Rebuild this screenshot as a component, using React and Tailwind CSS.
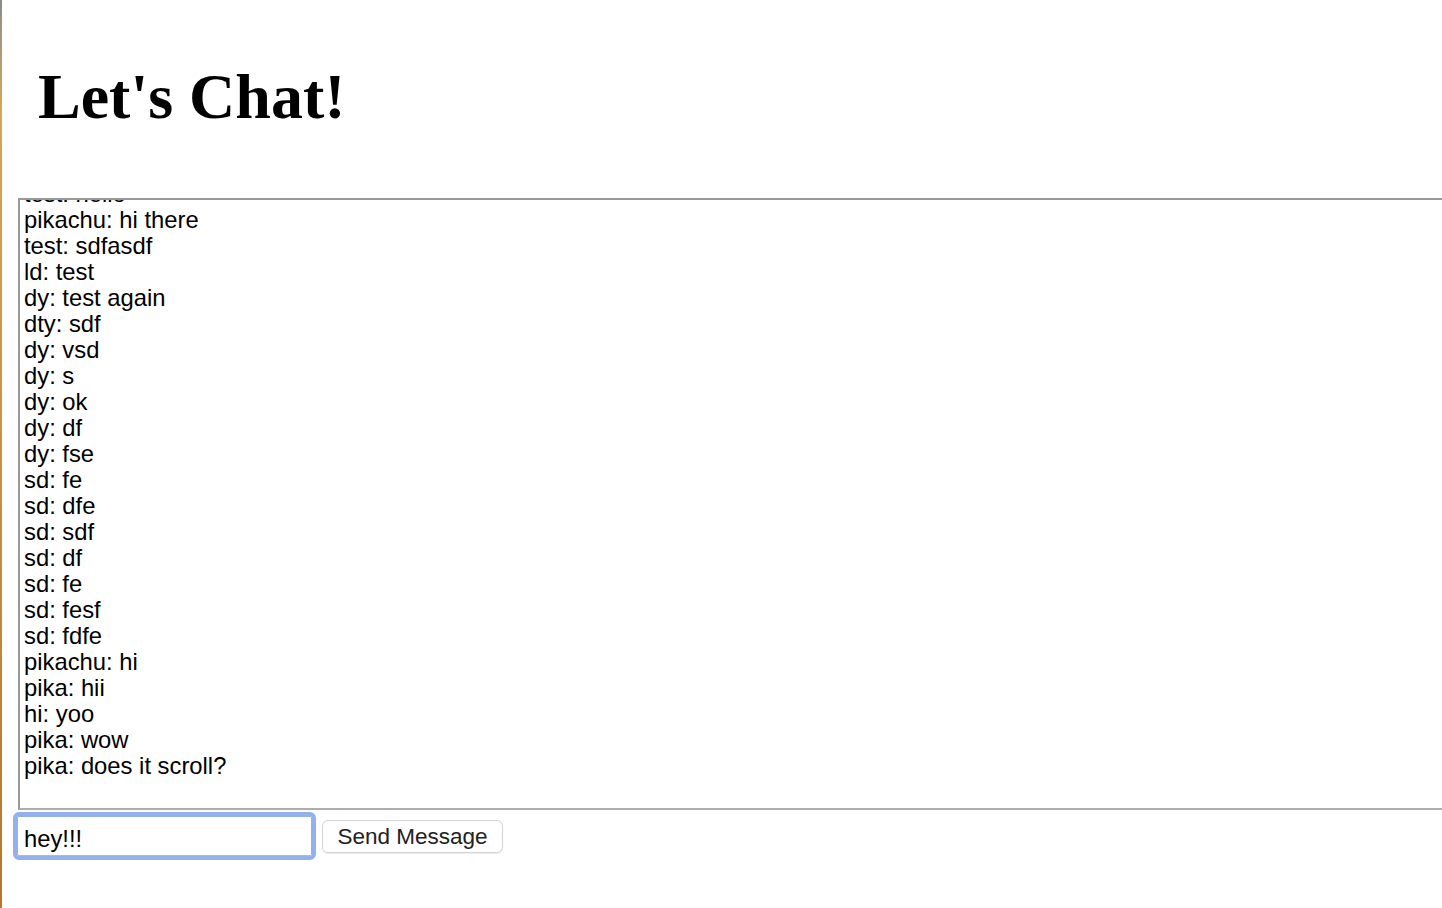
import React from "react";

const messages = [
  "test: hello",
  "pikachu: hi there",
  "test: sdfasdf",
  "ld: test",
  "dy: test again",
  "dty: sdf",
  "dy: vsd",
  "dy: s",
  "dy: ok",
  "dy: df",
  "dy: fse",
  "sd: fe",
  "sd: dfe",
  "sd: sdf",
  "sd: df",
  "sd: fe",
  "sd: fesf",
  "sd: fdfe",
  "pikachu: hi",
  "pika: hii",
  "hi: yoo",
  "pika: wow",
  "pika: does it scroll?",
];

export default function App() {
  return (
    <div className="flex h-[908px] w-full overflow-hidden bg-white">
      <div className="w-[2px] shrink-0 bg-gradient-to-b from-[#8c8c8c] from-0% via-[#d1a753] via-12% to-[#b6772d] to-100%" />
      <div className="flex min-w-0 flex-1 flex-col">
        <h1
          className="ml-[36px] mt-[65px] text-[64px] font-bold leading-[64px] text-black"
          style={{ fontFamily: '"Liberation Serif", "Times New Roman", serif' }}
        >
          Let's Chat!
        </h1>
        <div
          className="ml-[16px] mt-[69px] h-[612px] w-[1500px] shrink-0 overflow-hidden border-2 border-t-[#999999] border-l-[#999999] border-b-[#adadad] border-r-[#adadad] bg-white"
          style={{ fontFamily: '"Liberation Sans", Arial, sans-serif' }}
        >
          <div className="mt-[-19px] pl-[4px] text-[23.8px] leading-[26px] text-black">
            {messages.map((m, i) => (
              <div key={i}>{m}</div>
            ))}
          </div>
        </div>
        <div
          className="ml-[15px] mt-[6px] flex items-start"
          style={{ fontFamily: '"Liberation Sans", Arial, sans-serif' }}
        >
          <input
            type="text"
            defaultValue="hey!!!"
            className="box-border h-[40px] w-[295px] rounded-[2px] border border-[#93b0ef] border-b-[#b8b8b8] bg-white px-[6px] pb-0 pt-[6px] text-[23.8px] text-black outline-[4px] outline-solid outline-[#93b0ef]"
          />
          <button
            type="button"
            className="ml-[10px] mt-[4px] h-[33px] w-[181px] rounded-[6px] border border-[#d4d4d4] bg-white text-[22.5px] leading-[31px] text-[#222222] shadow-[0_1px_1px_rgba(0,0,0,0.08)]"
          >
            Send Message
          </button>
        </div>
      </div>
    </div>
  );
}
